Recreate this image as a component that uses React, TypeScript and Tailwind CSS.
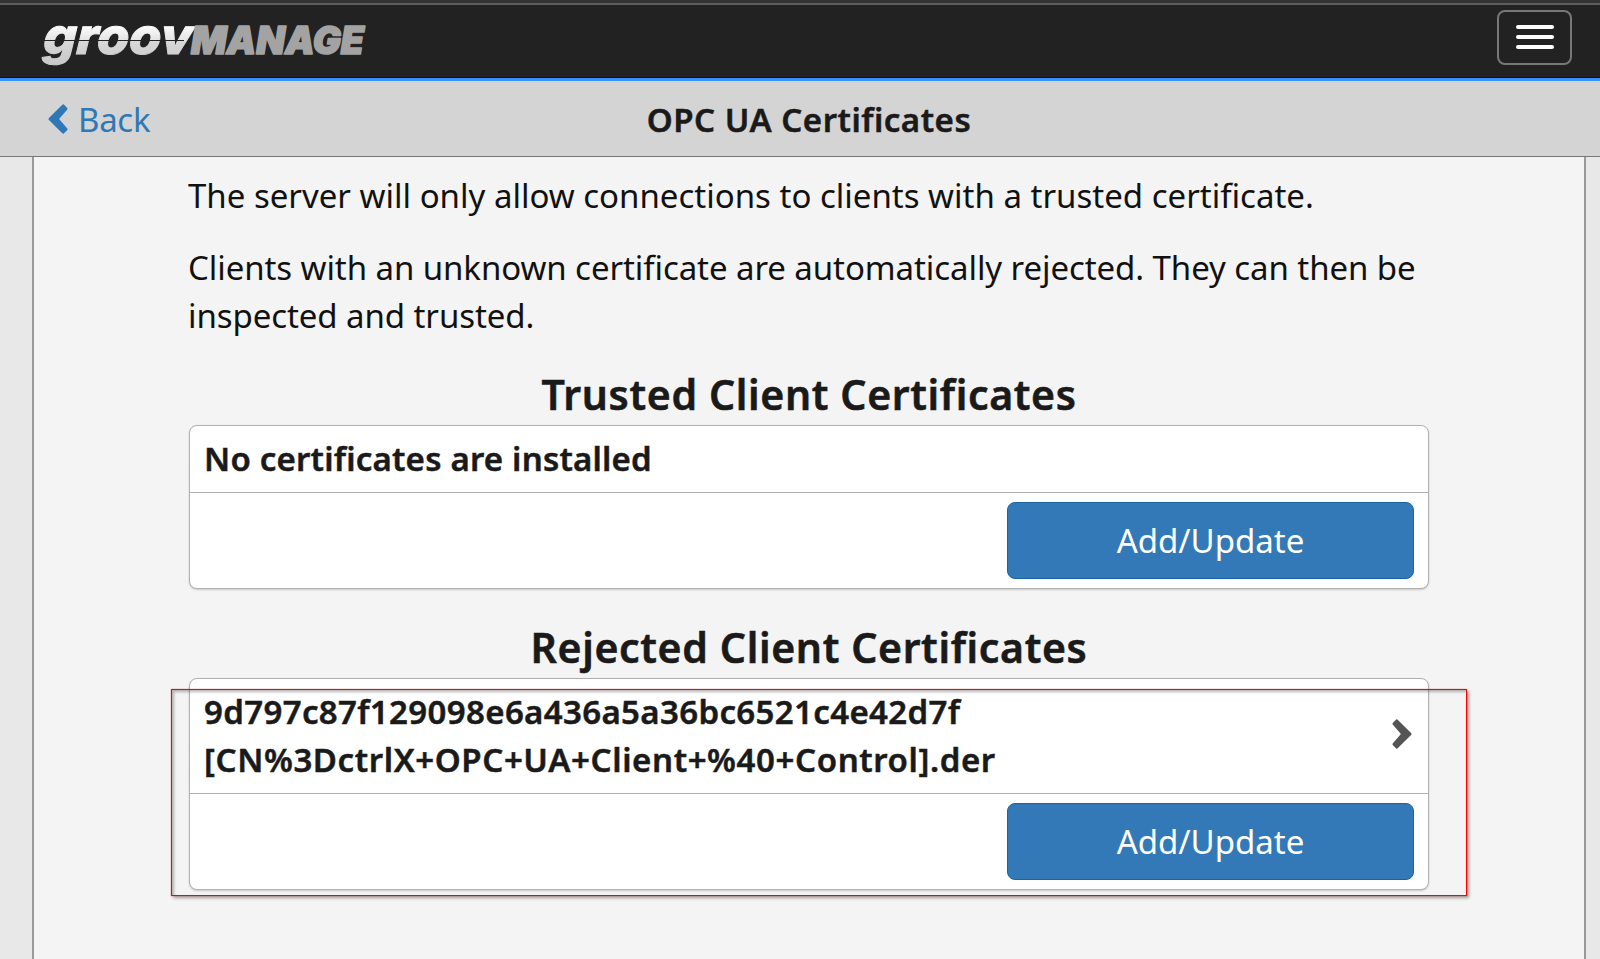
import React, { useState } from "react";

// Certificate list type
type CertificateGroup = {
  title: string;
  titleClass: string;
  certificates: { text: string; className: string }[][];
};

const groups: CertificateGroup[] = [
  {
    title: "Trusted Client Certificates",
    titleClass: "mt-[30px]",
    certificates: [],
  },
  {
    title: "Rejected Client Certificates",
    titleClass: "mt-[35px]",
    certificates: [
      [
        { text: "9d797c87f129098e6a436a5a36bc6521c4e42d7f", className: "tracking-[0.35px]" },
        { text: "[CN%3DctrlX+OPC+UA+Client+%40+Control].der", className: "tracking-[0.6px]" },
      ],
    ],
  },
];

// Simple chevron used by the back link and the rows
const Chevron = ({ className = "" }: { className?: string }) => (
  <svg viewBox="0 0 20 30" className={className} fill="currentColor" aria-hidden="true">
    <path d="M0.7 24.6 L8.9 15 L0.7 5.4 Q0.2 4.6 0.7 4 L4.2 0.6 Q5 0 5.7 0.7 L19.3 14.3 Q19.8 15 19.3 15.7 L5.7 29.3 Q5 30 4.2 29.4 L0.7 26 Q0.2 25.4 0.7 24.6 Z" />
  </svg>
);

const Logo = () => (
  <svg width="340" height="68" viewBox="0 0 340 68" className="block overflow-visible" role="img" aria-label="groov Manage">
    <defs>
      <linearGradient id="silver" x1="0" y1="19" x2="0" y2="59" gradientUnits="userSpaceOnUse">
        <stop offset="0" stopColor="#ffffff" />
        <stop offset="0.4" stopColor="#e4e4e4" />
        <stop offset="0.45" stopColor="#d8d8d8" />
        <stop offset="1" stopColor="#c8c8c8" />
      </linearGradient>
    </defs>
    <text
      x="0"
      y="49"
      transform="translate(6 0) skewX(-4)"
      textLength="149"
      lengthAdjust="spacingAndGlyphs"
      fontFamily="Inter, sans-serif"
      fontWeight="800"
      fontStyle="italic"
      fontSize="50"
      fill="url(#silver)"
      stroke="url(#silver)"
      strokeWidth="1"
    >
      groov
    </text>
    <rect x="4" y="35" width="140" height="1" fill="#222222" />
    <text
      x="151"
      y="48.5"
      textLength="173"
      lengthAdjust="spacingAndGlyphs"
      fontFamily="Inter, sans-serif"
      fontWeight="900"
      fontStyle="italic"
      fontSize="38"
      fill="#a3a3a3"
      stroke="#a3a3a3"
      strokeWidth="1.6"
      strokeLinejoin="round"
    >
      MANAGE
    </text>
  </svg>
);

const AddButton = () => (
  <button
    type="button"
    className="h-[77px] w-[407px] rounded-[8px] border border-[#1864a3] bg-[#3379b7] pt-[2px] text-[33px] leading-[48px] text-white"
  >
    Add/Update
  </button>
);

const CertificateCard = ({ certificates }: Pick<CertificateGroup, "certificates">) => (
  <div className="rounded-[8px] border border-[#b0b0b0] bg-white shadow-[0_1px_2px_rgba(0,0,0,0.18)]">
    {certificates.length === 0 && (
      <div className="flex h-[67px] items-center border-b border-[#b0b0b0] px-[14px]">
        <span className="text-[33px] font-semibold leading-[48px] tracking-[0.21px] [-webkit-text-stroke:0.5px]">
          No certificates are installed
        </span>
      </div>
    )}
    {certificates.map((lines) => (
      <div
        key={lines[0].text}
        className="flex h-[115px] items-center justify-between border-b border-[#b0b0b0] pl-[14px] pr-[16px]"
      >
        <div className="pt-[1px] text-[33px] font-semibold leading-[48.5px] [-webkit-text-stroke:0.5px]">
          {lines.map((line) => (
            <div key={line.text} className={line.className}>
              {line.text}
            </div>
          ))}
        </div>
        <Chevron className="mb-[3px] h-[30px] w-[20px] text-[#555555]" />
      </div>
    ))}
    <div className="flex h-[95px] items-center justify-end pr-[14px]">
      <AddButton />
    </div>
  </div>
);

export default function App() {
  const [menuOpen, setMenuOpen] = useState(false);

  return (
    <div className="relative flex h-[959px] w-[1600px] flex-col overflow-hidden bg-[#e8e8e8] font-['Noto_Sans',sans-serif] text-[#1a1a1a]">
      {/* Navbar */}
      <div className="h-[3px] shrink-0 bg-[#333333]" />
      <header className="flex h-[75px] shrink-0 items-start justify-between border-b border-t-2 border-b-[#0d0d0d] border-t-[#5c5c5c] bg-[#222222] pl-[40px] pr-[28px]">
        <Logo />
        <button
          type="button"
          aria-label="Toggle navigation"
          aria-expanded={menuOpen}
          onClick={() => setMenuOpen(!menuOpen)}
          className="mt-[5px] flex h-[55px] w-[75px] flex-col items-center justify-center gap-[6px] rounded-[8px] border-2 border-[#777777] pb-[1px]"
        >
          <span className="h-[4px] w-[38px] rounded-[2px] bg-white" />
          <span className="h-[4px] w-[38px] rounded-[2px] bg-white" />
          <span className="h-[4px] w-[38px] rounded-[2px] bg-white" />
        </button>
      </header>

      {/* Page title */}
      <div className="grid h-[79px] shrink-0 grid-cols-[400px_1fr_400px] items-center border-b border-t-[3px] border-b-[#777777] border-t-[#3a90fa] bg-[#d4d4d4] pt-[2px]">
        <a href="#" className="flex items-center pl-[48px] text-[33px] leading-[48px] tracking-[-0.3px] text-[#2f78b7]">
          <Chevron className="mr-[10px] mb-[1px] h-[30px] w-[20px] -scale-x-100" />
          Back
        </a>
        <h1 className="pl-[18px] text-center text-[33px] font-semibold leading-[48px] tracking-[0.5px] [-webkit-text-stroke:0.5px]">
          OPC UA Certificates
        </h1>
      </div>

      {/* Content */}
      <main className="ml-[32px] mr-[14px] grow border-x-2 border-[#999999] bg-[#f4f4f4] px-[155px] pt-[15px]">
        <p className="-ml-px text-[33px] leading-[48.5px] text-[#111111]">
          The server will only allow connections to clients with a trusted certificate.
        </p>
        <p className="-ml-px mt-[23px] text-[33px] leading-[48.5px] tracking-[-0.08px] text-[#111111]">
          Clients with an unknown certificate are automatically rejected. They can then be
          <br />
          inspected and trusted.
        </p>
        {groups.map((group) => (
          <section key={group.title}>
            <h2
              className={`mb-[8px] text-center text-[41px] font-semibold leading-[46px] tracking-[0.65px] [-webkit-text-stroke:0.6px] ${group.titleClass}`}
            >
              {group.title}
            </h2>
            <CertificateCard certificates={group.certificates} />
          </section>
        ))}
      </main>

      {/* Highlight over the rejected certificate */}
      <div className="pointer-events-none absolute left-[171px] top-[689px] h-[207px] w-[1296px] border border-[#ff0000] shadow-[0_0_1px_rgba(255,0,0,0.6),2px_2px_3px_rgba(0,0,0,0.35),inset_2px_2px_3px_rgba(0,0,0,0.28)]" />
    </div>
  );
}
